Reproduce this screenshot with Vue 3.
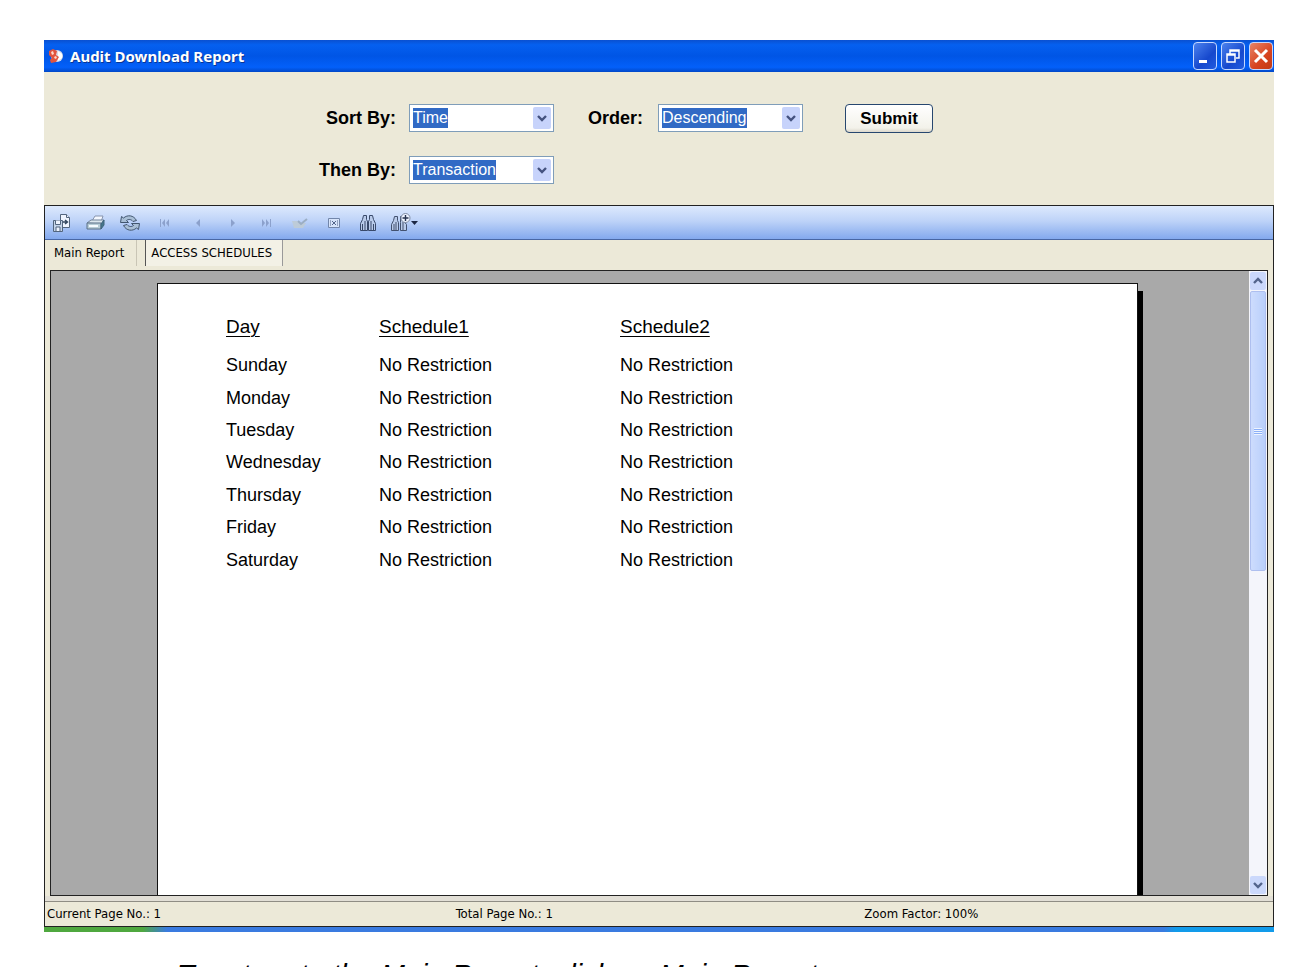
<template>
  <div class="page">
    <main class="window">
      <header class="titlebar">
        <svg class="app-icon" viewBox="0 0 16 16" aria-hidden="true">
          <circle cx="9" cy="8" r="6" fill="#d9dce8" />
          <path d="M10 3l4 3v4l-4 3z" fill="#fff" />
          <path d="M1 3l4-2 4 2-1 4 3 2-3 5-5 1-1-3 2-2-3-3z" fill="#e2543f" />
          <path d="M3 4l2-1 1 3-2 1zM6 9l2-1 1 2-2 1z" fill="#ffd9cc" />
        </svg>
        <h1 class="title">Audit Download Report</h1>
        <button class="win-btn" type="button" aria-label="Minimize">
          <svg viewBox="0 0 22 26"><path d="M5 17h8v3H5z" fill="#fff" /></svg>
        </button>
        <button class="win-btn" type="button" aria-label="Restore">
          <svg viewBox="0 0 22 26" fill="none" stroke="#fff">
            <path d="M8 11V7h9v8h-3M8 8h9" stroke-width="1.5" />
            <path d="M5 11h8v8H5zM5 12h8" stroke-width="1.5" />
          </svg>
        </button>
        <button class="win-btn close" type="button" aria-label="Close">
          <svg viewBox="0 0 22 26"><path d="M5 7l12 12M17 7L5 19" stroke="#fff" stroke-width="3" /></svg>
        </button>
      </header>

      <form class="options" @submit.prevent>
        <template v-for="f in fields" :key="f.id">
          <label class="label" :class="f.id" :for="f.id">{{ f.label }}</label>
          <div class="combo" :class="f.id">
            <select :id="f.id" v-model="f.value">
              <option v-for="o in f.options" :key="o">{{ o }}</option>
            </select>
            <span class="drop">
              <svg viewBox="0 0 10 8"><path d="M1 2l4 4 4-4" fill="none" stroke="#44527f" stroke-width="2.4" /></svg>
            </span>
          </div>
        </template>
        <button class="submit" type="submit">Submit</button>
      </form>

      <section class="viewer">
        <div class="toolbar">
          <button type="button" aria-label="Export">
            <svg viewBox="0 0 22 20" fill="#eef4ff" stroke="#52657e">
              <path d="M9.5 1.5h6l3 3v10h-9z" />
              <path d="M15.5 1.5v3h3" />
              <path d="M2.5 7.5h9v11h-9z" fill="#c5d5ea" />
              <path d="M4.5 7.5v4h5v-4M5 18v-4h4v4" />
              <path d="M12 9h4M14 7l2.5 2-2.5 2" fill="none" stroke="#33475f" stroke-width="1.4" />
            </svg>
          </button>
          <button type="button" aria-label="Print">
            <svg viewBox="0 0 22 20">
              <path d="M7 8l3-5h8l-2 6z" fill="#f4f8ff" stroke="#8794ae" />
              <path d="M2 10l4-3h13l-3 4z" fill="#dce8ef" stroke="#71839a" />
              <path d="M2 10h14v6H2z" fill="#b7cdd7" stroke="#5b7188" />
              <path d="M16 11l3-4v5l-3 4z" fill="#45768a" stroke="#40647b" />
              <path d="M4 13h9" stroke="#f5fbff" stroke-width="2" />
            </svg>
          </button>
          <button type="button" aria-label="Refresh">
            <svg viewBox="0 0 22 20" fill="#a9bfd6" stroke="#42566f">
              <path d="M1.5 9.5l1-6 2 1.5c4-3.5 10-3 13 2.5l-3.5 1c-2-2.5-4.5-2.5-6.5-1l2 2z" />
              <path d="M20.5 10.5l-1 6-2-1.5c-4 3.5-10 3-13-2.5l3.5-1c2 2.5 4.5 2.5 6.5 1l-2-2z" />
            </svg>
          </button>
          <button type="button" disabled aria-label="First page">
            <svg viewBox="0 0 22 20" fill="#8ca1cc"><path d="M7 6h1v8H7zM12 6v8l-3-4zM16 6v8l-3-4z" /></svg>
          </button>
          <button type="button" disabled aria-label="Previous page">
            <svg viewBox="0 0 22 20" fill="#8ca1cc"><path d="M13 6v8l-4-4z" /></svg>
          </button>
          <button type="button" disabled aria-label="Next page">
            <svg viewBox="0 0 22 20" fill="#8ca1cc"><path d="M10 6v8l4-4z" /></svg>
          </button>
          <button type="button" disabled aria-label="Last page">
            <svg viewBox="0 0 22 20" fill="#8ca1cc"><path d="M7 6v8l3-4zM11 6v8l3-4zM15 6h1v8h-1z" /></svg>
          </button>
          <button type="button" disabled aria-label="Go to page">
            <svg viewBox="0 0 22 20">
              <path d="M3 8h5l2 2h7l-3 5H5z" fill="#bdcbd8" />
              <path d="M9 8l3 3 6-5" fill="none" stroke="#9baec4" stroke-width="2" />
            </svg>
          </button>
          <button type="button" aria-label="Close current view">
            <svg viewBox="0 0 22 20" fill="none" stroke="#7286aa">
              <path d="M5.5 5.5h11v9h-11z" fill="#d7e4fa" />
              <path d="M7 8h1M7 10h1M7 12h1M14 8h1M14 10h1M14 12h1M9 8l4 4M13 8l-4 4" stroke="#52658a" />
            </svg>
          </button>
          <button type="button" aria-label="Find text">
            <svg viewBox="0 0 22 20" fill="#b9cbea" stroke="#38496a">
              <path d="M5.5 6.5l1-4h3v4l1 2v9h-7v-7z" />
              <path d="M16.5 6.5l-1-4h-3v4l-1 2v9h7v-7z" />
              <path d="M5.5 11v6M8 8v9M14 8v9M16.5 11v6M10 9h2" />
            </svg>
          </button>
          <button class="zoom-btn" type="button" aria-label="Zoom">
            <svg viewBox="0 0 22 20" fill="#b9cbea" stroke="#42516f">
              <path d="M4.5 7.5l1-4h3v4l1 2v8h-7v-6z" />
              <path d="M11.5 3.5h3v4l3 4v6h-6v-8z" />
              <path d="M5 11v6M7 9v8M14 9v8" />
              <circle cx="16.5" cy="5" r="4.5" fill="#edf3ff" stroke="#7e8ba3" />
              <path d="M16.5 2v6M13.5 5h6" stroke="#26334f" stroke-width="1.4" />
            </svg>
            <svg class="caret" viewBox="0 0 7 4"><path d="M0 0h7L3.5 4z" fill="#1c2743" /></svg>
          </button>
        </div>

        <nav class="tabs">
          <button
            v-for="t in tabs"
            :key="t"
            type="button"
            class="tab"
            :class="{ active: t === current }"
            @click="current = t"
          >{{ t }}</button>
        </nav>

        <div class="frame">
          <div class="canvas">
            <article class="sheet">
              <table>
                <thead>
                  <tr>
                    <th class="day"><span>Day</span></th>
                    <th><span>Schedule1</span></th>
                    <th><span>Schedule2</span></th>
                  </tr>
                </thead>
                <tbody>
                  <tr v-for="d in days" :key="d">
                    <td>{{ d }}</td>
                    <td>No Restriction</td>
                    <td>No Restriction</td>
                  </tr>
                </tbody>
              </table>
            </article>
          </div>
          <div class="scrollbar">
            <button type="button" aria-label="Scroll up">
              <svg viewBox="0 0 10 8"><path d="M1 6l4-4 4 4" fill="none" stroke="#53648c" stroke-width="2.4" /></svg>
            </button>
            <div class="track">
              <div class="thumb"><span class="grip"></span></div>
            </div>
            <button type="button" aria-label="Scroll down">
              <svg viewBox="0 0 10 8"><path d="M1 2l4 4 4-4" fill="none" stroke="#53648c" stroke-width="2.4" /></svg>
            </button>
          </div>
        </div>

        <footer class="status">
          <span>Current Page No.: 1</span>
          <span>Total Page No.: 1</span>
          <span>Zoom Factor: 100%</span>
        </footer>
      </section>
      <div class="taskbar"></div>
    </main>
    <p class="note">To return to the Main Report, click on Main Report.</p>
  </div>
</template>

<script setup>
import { ref, reactive } from 'vue'

const fields = reactive([
  { id: 'sort', label: 'Sort By:', value: 'Time', options: ['Time', 'Transaction'] },
  { id: 'order', label: 'Order:', value: 'Descending', options: ['Descending', 'Ascending'] },
  { id: 'then', label: 'Then By:', value: 'Transaction', options: ['Transaction', 'Time'] }
])

const tabs = ['Main Report', 'ACCESS SCHEDULES']
const current = ref('ACCESS SCHEDULES')

const days = ['Sunday', 'Monday', 'Tuesday', 'Wednesday', 'Thursday', 'Friday', 'Saturday']
</script>

<style>
body {
  margin: 0;
  background: #fff;
}
</style>

<style scoped>
* {
  box-sizing: border-box;
}
button {
  padding: 0;
  margin: 0;
  border: 0;
  background: none;
  color: inherit;
}
.page {
  height: 100vh;
  padding: 40px 35px 0 44px;
  overflow: hidden;
  display: flex;
  flex-direction: column;
  font-family: "Liberation Sans", Arial, sans-serif;
  color: #000;
}
.window {
  flex: none;
  height: calc(100vh - 75px);
  display: flex;
  flex-direction: column;
  background: #ece9d8;
}

/* title bar */
.titlebar {
  height: 32px;
  padding: 0 1px 0 4px;
  display: flex;
  align-items: center;
  gap: 4px;
  background: linear-gradient(#0a50d0 0, #0560f0 15%, #0055e5 50%, #0360fa 85%, #0148c8 100%);
}
.app-icon {
  width: 16px;
  height: 16px;
}
.title {
  flex: 1;
  margin: 0 0 0 2px;
  font: bold 15px/20px "Noto Sans", "Open Sans", sans-serif;
  color: #fff;
  text-shadow: 1px 1px #0a3592;
}
.win-btn {
  width: 24px;
  height: 28px;
  border: 1px solid #c5d8ff;
  border-radius: 4px;
  background: linear-gradient(135deg, #4c82ee, #1648cd 60%, #205ce0);
}
.win-btn svg {
  display: block;
  width: 22px;
  height: 26px;
}
.win-btn.close {
  background: linear-gradient(135deg, #e88467, #d7431f 60%, #c13a16);
}

/* sort options */
.options {
  height: 133px;
  padding: 32px 0 0 271px;
  display: grid;
  grid-template-columns: 81px 13px 145px 34px 55px 15px 145px 42px 88px;
  grid-auto-rows: 28px;
  row-gap: 24px;
  align-content: start;
}
.label {
  font: bold 18px/29px "Liberation Sans", Arial, sans-serif;
  white-space: nowrap;
  text-align: right;
}
.combo {
  height: 28px;
  padding: 2px;
  display: flex;
  justify-content: space-between;
  border: 1px solid #7f9db9;
  background: #fff;
}
.combo select {
  appearance: none;
  field-sizing: content;
  height: 20px;
  margin: 1px;
  padding: 0;
  border: 0;
  border-radius: 0;
  background: #316ac5;
  color: #fff;
  font: 16px/20px "Liberation Sans", Arial, sans-serif;
}
.drop {
  width: 18px;
  display: grid;
  place-items: center;
  border-radius: 2px;
  background: #c7d3fb;
}
.drop svg,
.scrollbar svg {
  width: 10px;
  height: 8px;
}
.label.sort { grid-area: 1 / 1; }
.combo.sort { grid-area: 1 / 3; }
.label.order { grid-area: 1 / 5; }
.combo.order { grid-area: 1 / 7; }
.label.then { grid-area: 2 / 1; }
.combo.then { grid-area: 2 / 3; }
.submit {
  grid-area: 1 / 9;
  height: 29px;
  border: 1px solid #27476f;
  border-radius: 4px;
  background: linear-gradient(#fff, #f3f2ea 85%, #dcd8cc);
  font: bold 17px/28px "Liberation Sans", Arial, sans-serif;
}

/* report viewer */
.viewer {
  flex: 1;
  min-height: 0;
  display: flex;
  flex-direction: column;
  border: 1px solid #222;
  font: 13px/16px "DejaVu Sans Condensed", Tahoma, sans-serif;
}
.toolbar {
  height: 34px;
  flex: none;
  display: flex;
  background: linear-gradient(#dde9fd, #bed3f8 45%, #83a9ee);
  border-bottom: 1px solid #4867a5;
}
.toolbar button {
  width: 34px;
  display: flex;
  align-items: center;
  justify-content: center;
}
.toolbar svg {
  width: 22px;
  height: 20px;
}
.toolbar .zoom-btn {
  width: 46px;
  justify-content: flex-start;
  padding-left: 4px;
}
.toolbar .caret {
  width: 7px;
  height: 4px;
}
.tabs {
  height: 30px;
  flex: none;
  display: flex;
}
.tab {
  height: 26px;
  padding: 0 12px 0 9px;
  border-right: 1px solid #c9c5b5;
  font: inherit;
}
.tab.active {
  margin-left: 8px;
  padding: 0 10px 0 5px;
  border-left: 1px solid #555;
  border-right: 1px solid #999;
  background: #f3f1e6;
}
.frame {
  flex: 1;
  min-height: 0;
  margin: 0 5px;
  display: flex;
  border: 1px solid #222;
}
.canvas {
  flex: 1;
  min-width: 0;
  padding: 12px 111px 0 106px;
  overflow: hidden;
  background: #a9a9a9;
}
.sheet {
  height: 100%;
  padding: 21px 0 0 68px;
  border: 1px solid #111;
  border-bottom: 0;
  background: #fff;
  box-shadow: 5px 8px #000;
}
table {
  height: 271px;
  border-collapse: collapse;
  font: 18px/24px "Liberation Sans", Arial, sans-serif;
}
th,
td {
  padding: 0;
  height: 32px;
  text-align: left;
  font-weight: normal;
  white-space: nowrap;
}
th {
  height: 44px;
  width: 241px;
  font-size: 19px;
}
th.day {
  width: 153px;
}
th span {
  text-decoration: underline;
  text-decoration-thickness: 1px;
  text-underline-offset: 3px;
}
.scrollbar {
  width: 18px;
  padding: 1px;
  display: flex;
  flex-direction: column;
  background: #f4f5fb;
}
.scrollbar button {
  height: 18px;
  flex: none;
  display: grid;
  place-items: center;
  border-radius: 2px;
  background: #cbd8fb;
}
.track {
  flex: 1;
  padding: 1px 0;
}
.thumb {
  height: 48%;
  display: grid;
  place-items: center;
  border: 1px solid #aebfef;
  border-radius: 2px;
  background: linear-gradient(90deg, #cddcfd, #b9cffb);
}
.grip {
  width: 8px;
  height: 7px;
  background: repeating-linear-gradient(#eef4fe 0 1px, #8cb0f8 1px 2px);
}
.status {
  height: 30px;
  flex: none;
  padding: 6px 0 0 2px;
  display: grid;
  grid-template-columns: repeat(3, 1fr);
  line-height: 24px;
  background: linear-gradient(#e2dfd6 0 5px, #8f8d84 5px 6px, #ece9d8 6px);
}
.taskbar {
  height: 5px;
  background: linear-gradient(90deg, #4fa83f 0 8%, #3a7be0 10% 91%, #129bea 92%);
}
.note {
  flex: none;
  margin: 26px 0 0 133px;
  font: italic 29px/34px "Liberation Sans", Arial, sans-serif;
  white-space: nowrap;
}
</style>
